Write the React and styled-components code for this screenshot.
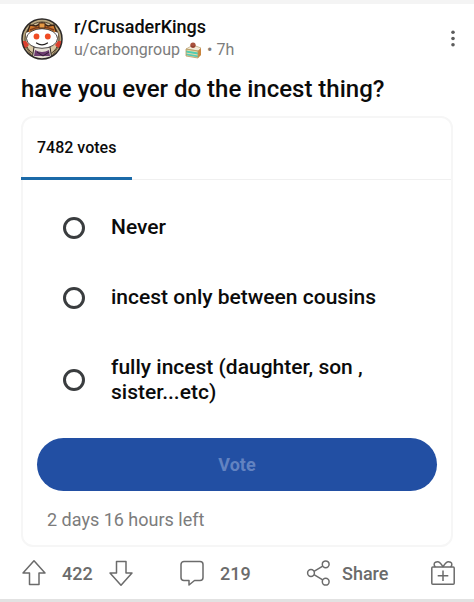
import React, { useState } from "react";
import styled, { createGlobalStyle } from "styled-components";

const GlobalStyle = createGlobalStyle`
  body {
    margin: 0;
    background: #ffffff;
    font-family: Roboto, "Liberation Sans", sans-serif;
    color: #0b0b0b;
  }

  * {
    box-sizing: border-box;
  }
`;

const Post = styled.article`
  border-top: 4px solid #f4f4f4;
  border-bottom: 3px solid #e2e2e2;
  padding: 11px 0 0;
`;

const Header = styled.header`
  display: flex;
  align-items: center;
  gap: 11px;
  padding: 0 10px 0 21px;
`;

const Names = styled.div`
  flex: 1;
  display: flex;
  flex-direction: column;
`;

const Community = styled.a`
  font-size: 18px;
  font-weight: 500;
  line-height: 23px;
  color: #0b0b0b;
  text-decoration: none;
`;

const Byline = styled.div`
  display: flex;
  align-items: center;
  gap: 5px;
  font-size: 16px;
  line-height: 24px;
  color: #7c7c7c;
`;

const Author = styled.a`
  color: inherit;
  text-decoration: none;
`;

const IconButton = styled.button`
  display: flex;
  align-items: center;
  justify-content: center;
  padding: 0;
  border: none;
  background: none;
  color: #6b6b6b;
  cursor: pointer;
`;

const Title = styled.h1`
  margin: 0;
  padding: 13px 21px 13px;
  font-size: 24px;
  font-weight: 500;
  line-height: 28px;
`;

const Card = styled.form`
  margin: 0 21px;
  border: 2px solid #f6f6f6;
  border-radius: 12px;
`;

const Tabs = styled.div`
  display: flex;
  border-bottom: 1px solid #f0f0f0;
`;

const VotesTab = styled.div`
  margin: 0 0 -1px -2px;
  padding: 18px 16px 17px;
  border-bottom: 3px solid #1b6aa8;
  font-size: 16px;
  font-weight: 500;
  line-height: 24px;
`;

const Options = styled.div`
  display: flex;
  flex-direction: column;
  gap: 45px;
  padding: 35px 40px 33px;
`;

const Option = styled.label`
  display: flex;
  align-items: center;
  gap: 26px;
  font-size: 21px;
  font-weight: 500;
  line-height: 25px;
  cursor: pointer;
`;

const Radio = styled.input`
  appearance: none;
  flex: none;
  width: 22px;
  height: 22px;
  margin: 0;
  border: 3px solid #3a3d3f;
  border-radius: 50%;
  background: #ffffff;

  &:checked {
    background: #224fa3;
    box-shadow: inset 0 0 0 3px #ffffff;
  }
`;

const VoteArea = styled.div`
  padding: 0 14px;
`;

const VoteButton = styled.button`
  width: 100%;
  height: 53px;
  border: none;
  border-radius: 27px;
  background: #224fa3;
  color: ${({ $ready }) => ($ready ? "#ffffff" : "#6383c1")};
  font-family: inherit;
  font-size: 18px;
  font-weight: 700;
`;

const TimeLeft = styled.p`
  margin: 0;
  padding: 17px 10px 13px;
  font-size: 18px;
  line-height: 24px;
  color: #7c7c7c;
`;

const Footer = styled.footer`
  display: grid;
  grid-template-columns: 158fr 127fr 124fr auto;
  align-items: center;
  justify-items: start;
  height: 52px;
  padding: 0 18px 0 21px;
`;

const Group = styled.div`
  display: flex;
  align-items: center;
  gap: 15px;
`;

const Action = styled(IconButton)`
  gap: ${({ $gap }) => $gap || "15px"};
  font-family: inherit;
  font-size: 18px;
  font-weight: 500;
`;

const Score = styled.span`
  font-size: 18px;
  font-weight: 500;
  color: #6b6b6b;
`;

const AvatarIcon = () => (
  <svg width="42" height="42" viewBox="0 0 42 42" aria-hidden="true">
    <defs>
      <clipPath id="ring">
        <circle cx="21" cy="21" r="20" />
      </clipPath>
    </defs>
    <g clipPath="url(#ring)">
      <rect width="42" height="42" fill="#b9a77f" />
      <circle cx="21" cy="21" r="17" fill="#d9c9a4" stroke="#4b3d2c" strokeWidth="1" />
      <path d="M0 23h5l3 4-3 3H0zM42 23h-5l-3 4 3 3h5z" fill="#d9402f" />
      <path d="M5 29l6 9M37 29l-6 9" stroke="#6b5a40" strokeWidth="1" />
      <path d="M13 29h16l2 13H11z" fill="#e6e0d4" stroke="#342a26" strokeWidth="1" />
      <path d="M14 32q7 4 14 0l1 6H13z" fill="#6d3d70" />
      <path d="M16 34l6 4 6-4" fill="none" stroke="#2f1d35" strokeWidth="1" />
      <path d="M6 16L9 7l6 1 6-3 6 3 6-1 3 9z" fill="#d27a2e" stroke="#3b2617" strokeWidth="1.4" />
      <path d="M9 12q12-6 24 0" fill="none" stroke="#7c3d1c" strokeWidth="1.4" />
      <path d="M18 5h6v5h-6z" fill="#e69a45" stroke="#4b2a18" strokeWidth="1" />
    </g>
    <circle cx="7.5" cy="16.5" r="2.6" fill="#fff" />
    <circle cx="34.5" cy="16.5" r="2.6" fill="#fff" />
    <ellipse cx="21" cy="20.5" rx="15.5" ry="9.800" fill="#fff" stroke="#242020" strokeWidth="0.8" />
    <circle cx="15.5" cy="18.5" r="2.9" fill="#f04b23" />
    <circle cx="26.8" cy="18.5" r="2.9" fill="#f04b23" />
    <path d="M15.5 25q5.500 3.600 11 0" fill="none" stroke="#242020" strokeWidth="1.2" strokeLinecap="round" />
    <circle cx="21" cy="21" r="20" fill="none" stroke="#2c2927" strokeWidth="1.5" />
  </svg>
);

const CakeIcon = () => (
  <svg width="17" height="17" viewBox="0 0 17 17" aria-label="Cake day">
    <path d="M1 7v7l12 2 3-3V6L9 3z" fill="#ead9a6" />
    <path d="M1 7l7-4 8 3-3 3z" fill="#f1ead8" stroke="#bfa77f" strokeWidth="0.7" />
    <path d="M1 8.500l12 2v2l-12-2z" fill="#4fcdb4" />
    <path d="M1 11.500l12 2v1.800l-12-2z" fill="#58c9b3" />
    <path d="M13 9l3-3v7l-3 3z" fill="#c9853e" />
    <path d="M1 7v7l12 2V9z" fill="none" stroke="#b79b62" strokeWidth="0.8" />
    <circle cx="8" cy="3.2" r="2.7" fill="#a9513d" />
    <path d="M6 4q2 2 4 0" fill="none" stroke="#7d3529" strokeWidth="0.8" />
  </svg>
);

const DotsIcon = () => (
  <svg width="22" height="26" viewBox="0 0 22 26" fill="#5c5c5c" aria-hidden="true">
    <circle cx="11" cy="6.2" r="1.8" />
    <circle cx="11" cy="12.5" r="1.8" />
    <circle cx="11" cy="18.8" r="1.8" />
  </svg>
);

const ArrowIcon = ({ down }) => (
  <svg width="26" height="28" viewBox="0 0 26 28" aria-hidden="true">
    <path
      d={
        down
          ? "M8.5 2.5h9.500v11.500h6L13 26.3 2 14h6.500z"
          : "M13 1.7L24 14h-6v11.5H8.500V14H2z"
      }
      fill="none"
      stroke="currentColor"
      strokeWidth="1.5"
      strokeLinejoin="round"
    />
  </svg>
);

const CommentIcon = () => (
  <svg width="26" height="28" viewBox="0 0 26 28" aria-hidden="true">
    <path
      d="M5 2.5h16a3 3 0 0 1 3 3v13a3 3 0 0 1-3 3h-5.500L10 26v-4.500H5a3 3 0 0 1-3-3v-13a3 3 0 0 1 3-3z"
      fill="none"
      stroke="currentColor"
      strokeWidth="1.5"
      strokeLinejoin="round"
    />
  </svg>
);

const ShareIcon = () => (
  <svg width="26" height="28" viewBox="0 0 26 28" aria-hidden="true">
    <g fill="none" stroke="currentColor" strokeWidth="1.5">
      <circle cx="5" cy="14" r="3.4" />
      <circle cx="19.7" cy="5.3" r="3.4" />
      <circle cx="19.7" cy="22.7" r="3.4" />
      <path d="M8 12.3l8.7-5.2M8 15.7l8.7 5.2" />
    </g>
  </svg>
);

const GiftIcon = () => (
  <svg width="26" height="28" viewBox="0 0 26 28" aria-hidden="true">
    <g fill="none" stroke="currentColor" strokeWidth="1.5">
      <rect x="1.8" y="8" width="22.4" height="17.2" rx="1" />
      <path d="M13 8C11 4 8 2 5.5 3.2 3.4 4.3 4 7 5.5 8M13 8c2-4 5-6 7.5-4.800 2.100 1.100 1.500 3.800 0 4.800M13 11.500v10.500M7.700 16.700h10.600" />
    </g>
  </svg>
);

const choices = [
  "Never",
  "incest only between cousins",
  "fully incest (daughter, son , sister...etc)",
];

const App = () => {
  const [selected, setSelected] = useState(null);

  return (
    <>
      <GlobalStyle />
      <Post>
        <Header>
          <AvatarIcon />
          <Names>
            <Community href="#community">r/CrusaderKings</Community>
            <Byline>
              <Author href="#author">u/carbongroup</Author>
              <CakeIcon />
              <span>• 7h</span>
            </Byline>
          </Names>
          <IconButton type="button" aria-label="More options">
            <DotsIcon />
          </IconButton>
        </Header>
        <Title>have you ever do the incest thing?</Title>
        <Card onSubmit={(e) => e.preventDefault()}>
          <Tabs>
            <VotesTab>7482 votes</VotesTab>
          </Tabs>
          <Options>
            {choices.map((choice, index) => (
              <Option key={choice}>
                <Radio
                  type="radio"
                  name="poll"
                  checked={selected === index}
                  onChange={() => setSelected(index)}
                />
                <span>{choice}</span>
              </Option>
            ))}
          </Options>
          <VoteArea>
            <VoteButton type="submit" disabled={selected === null} $ready={selected !== null}>
              Vote
            </VoteButton>
            <TimeLeft>2 days 16 hours left</TimeLeft>
          </VoteArea>
        </Card>
        <Footer>
          <Group>
            <IconButton type="button" aria-label="Upvote">
              <ArrowIcon />
            </IconButton>
            <Score>422</Score>
            <IconButton type="button" aria-label="Downvote">
              <ArrowIcon down />
            </IconButton>
          </Group>
          <Action type="button">
            <CommentIcon />
            219
          </Action>
          <Action type="button" $gap="10px">
            <ShareIcon />
            Share
          </Action>
          <IconButton type="button" aria-label="Give award">
            <GiftIcon />
          </IconButton>
        </Footer>
      </Post>
    </>
  );
};

export default App;
